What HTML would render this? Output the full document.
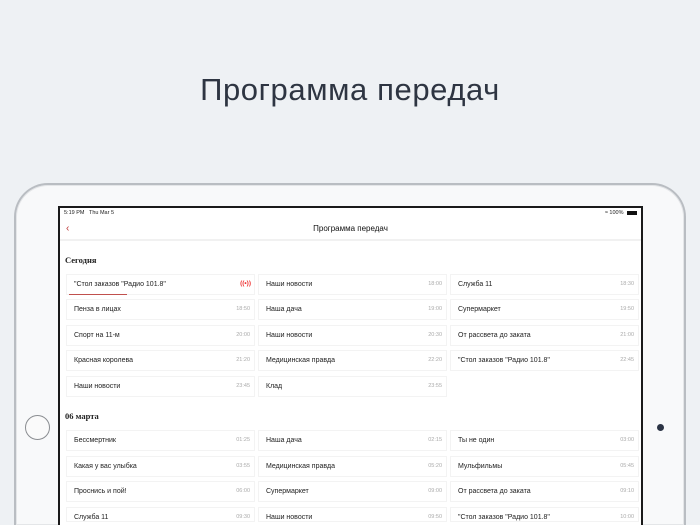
<!DOCTYPE html>
<html style="width:700px;height:525px;overflow:hidden"><head><meta charset="utf-8"><style>
*{margin:0;padding:0;box-sizing:border-box}
body{width:700px;height:525px;overflow:hidden;background:#eef1f4;font-family:"Liberation Sans","DejaVu Sans",sans-serif;position:relative}
h1{position:absolute;top:72px;left:0;width:700px;text-align:center;font-weight:normal;font-size:31px;color:#2e3542;letter-spacing:0.6px}
.ipad{position:absolute;left:14px;top:183px;width:672px;height:342px;border-radius:34px 34px 0 0;border:2px solid #b9bdc2;border-bottom:none;background:#f8f9fa;box-shadow:inset 0 0 0 1px #e4e6e8}
.home{position:absolute;left:25px;top:415px;width:25px;height:25px;border-radius:50%;border:1.5px solid #8a8d91;background:#fafafa}
.cam{position:absolute;left:657px;top:424px;width:7px;height:7px;border-radius:50%;background:#2b3445}
.screen{position:absolute;left:58px;top:206px;width:585px;height:319px;border:2px solid #1a1a1a;border-bottom:none;background:#fff;overflow:hidden}
.sb{position:absolute;top:2px;left:4px;font-size:5.5px;color:#222}
.sbr{position:absolute;top:2px;right:4px;font-size:5.5px;color:#222}
.bat{display:inline-block;width:10px;height:4px;background:#111;vertical-align:middle;margin-left:2px}
.nav{position:absolute;top:10px;left:0;width:100%;height:23px;border-bottom:2px solid #f1f1f1}
.nav .t{position:absolute;width:100%;text-align:center;top:6px;font-size:8px;color:#111}
.back{position:absolute;left:6px;top:5px;color:#b33;font-size:10px}
.sec{position:absolute;left:5px;font-size:8.5px;color:#222;font-family:"Liberation Serif",serif;font-weight:bold}
.cell{position:absolute;height:19px;background:#fff;box-shadow:0 0 0 1px #f3f3f3;font-size:7px;color:#222}
.cell .n{position:absolute;left:7px;top:5.5px}
.cell .tm{position:absolute;right:4px;top:6px;font-size:5.5px;color:#aaa}
.ul{position:absolute;left:2px;bottom:-1px;width:58px;height:1.5px;background:#c0504d}
.live{position:absolute;right:3px;top:5px;color:#e33;font-size:6.5px;font-weight:bold}
</style></head><body>
<h1>Программа передач</h1>
<div class="ipad"></div>
<div class="home"></div>
<div class="cam"></div>
<div class="screen">
<div class="sb">5:19 PM &nbsp; Thu Mar 5</div>
<div class="sbr">&#8776; 100% <span class="bat"></span></div>
<div class="nav"><span class="back">&lsaquo;</span><div class="t">Программа передач</div></div>
<div class="sec" style="top:47px">Сегодня</div>
<div class="sec" style="top:203px">06 марта</div>
<div id="g"></div>
</div>
<script>
var data=[
[67,[["\"Стол заказов \"Радио 101.8\"","L"],["Наши новости","18:00"],["Служба 11","18:30"]]],
[92,[["Пенза в лицах","18:50"],["Наша дача","19:00"],["Супермаркет","19:50"]]],
[118,[["Спорт на 11-м","20:00"],["Наши новости","20:30"],["От рассвета до заката","21:00"]]],
[143,[["Красная королева","21:20"],["Медицинская правда","22:20"],["\"Стол заказов \"Радио 101.8\"","22:45"]]],
[169,[["Наши новости","23:45"],["Клад","23:55"],null]],
[223,[["Бессмертник","01:25"],["Наша дача","02:15"],["Ты не один","03:00"]]],
[249,[["Какая у вас улыбка","03:55"],["Медицинская правда","05:20"],["Мульфильмы","05:45"]]],
[274,[["Проснись и пой!","06:00"],["Супермаркет","09:00"],["От рассвета до заката","09:10"]]],
[300,[["Служба 11","09:30"],["Наши новости","09:50"],["\"Стол заказов \"Радио 101.8\"","10:00"]]]];
var xs=[7,199,391],w=187,h="";
data.forEach(function(r){r[1].forEach(function(c,i){if(!c)return;
h+='<div class="cell" style="left:'+xs[i]+'px;top:'+r[0]+'px;width:'+w+'px;'+(r[0]>=300?'height:13px;':'')+'"><span class="n">'+c[0]+'</span>'+
(c[1]=="L"?'<span class="live">((•))</span><div class="ul"></div>':'<span class="tm">'+c[1]+'</span>')+'</div>';});});
document.getElementById('g').innerHTML=h;
</script>
</body></html>
